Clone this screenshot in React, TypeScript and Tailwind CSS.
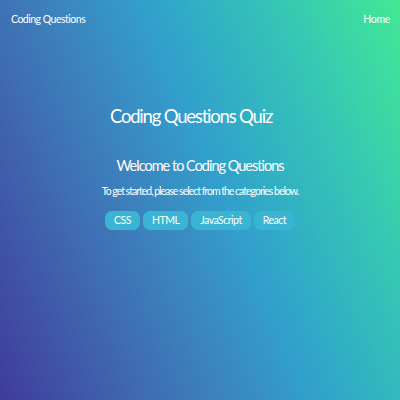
import React from 'react';

const categories = ['CSS', 'HTML', 'JavaScript', 'React'];

export default function App() {
  return (
    <div
      className="w-[400px] h-[400px] overflow-hidden bg-linear-67 from-[#3f3b9b] via-[#31a0cc] via-55% to-[#43e894] text-white flex flex-col"
      style={{ fontFamily: 'Lato, "Open Sans", sans-serif' }}
    >
      <nav className="flex items-center justify-between h-[40px] pl-[11px] pr-[10px]">
        <span className="text-[10.5px] tracking-[-0.5px]">Coding Questions</span>
        <span className="text-[10.5px] tracking-[-0.3px]">Home</span>
      </nav>

      <main className="flex flex-col items-center">
        <h1 className="mt-[65px] pr-[18px] text-[18.5px] leading-[22px] tracking-[-1.2px]">
          Coding Questions Quiz
        </h1>
        <h2 className="mt-[30px] text-[14.5px] leading-[18px] tracking-[-1px]">
          Welcome to Coding Questions
        </h2>
        <p className="mt-[9px] text-[10.5px] leading-[14px] tracking-[-1px]">
          To get started, please select from the categories below.
        </p>
        <div className="mt-[13px] flex gap-[3px]">
          {categories.map((c) => (
            <button
              key={c}
              className="h-[19px] px-[9px] rounded-[7px] bg-[#3ab4d3] text-[10.5px] tracking-[-0.5px] text-white"
            >
              {c}
            </button>
          ))}
        </div>
      </main>
    </div>
  );
}
